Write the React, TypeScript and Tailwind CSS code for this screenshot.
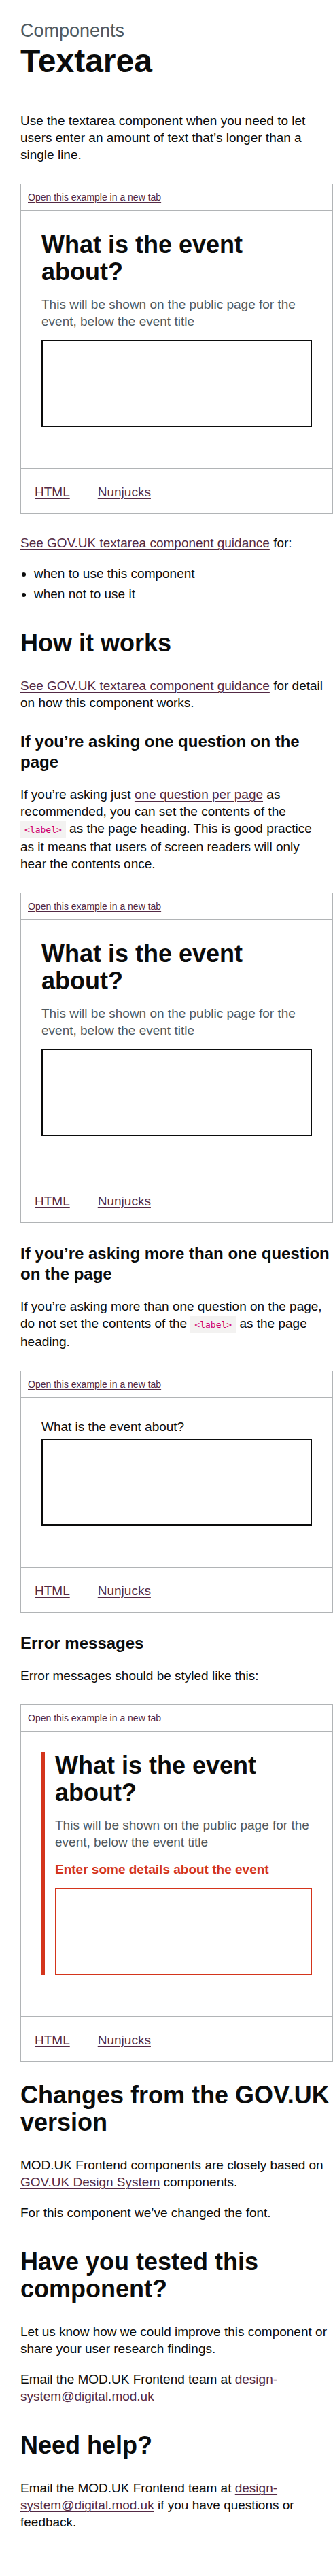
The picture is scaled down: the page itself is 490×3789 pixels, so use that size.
const link = "text-[#532a45] underline decoration-1 underline-offset-[0.1578em]";

function Code({ children }: { children: string }) {
  return (
    <code className="bg-[#f3f2f1] px-[6px] py-[5px] font-['DejaVu_Sans_Mono',monospace] text-[13px] text-[#d0006f]">
      {children}
    </code>
  );
}

// Example frame: "open in new tab" bar, the preview, then the code tabs
function Example({ children }: { children: React.ReactNode }) {
  return (
    <div className="mt-[30px] border border-[#b1b4b6]">
      <div className="border-b border-[#b1b4b6] px-[10px] py-[9px] text-[14px] leading-[20px]">
        <a href="#" className={link}>
          Open this example in a new tab
        </a>
      </div>
      <div className="px-[30px] pt-[30px] pb-[61px]">{children}</div>
      <div className="flex gap-[41px] border-t border-[#b1b4b6] pt-[21px] pb-[19px] pl-[20px] text-[19px] leading-[25px]">
        <a href="#" className={link}>
          HTML
        </a>
        <a href="#" className={link}>
          Nunjucks
        </a>
      </div>
    </div>
  );
}

function Field({ error }: { error?: boolean }) {
  return (
    <>
      <h1 className="mb-[15px] text-[36px] leading-[40px] font-bold">
        What is the event about?
      </h1>
      <div className="mb-[15px] text-[#505a5f]">
        This will be shown on the public page for the event, below the event
        title
      </div>
      {error && (
        <p className="mb-[15px] font-bold text-[#d4351c]">
          Enter some details about the event
        </p>
      )}
      <textarea
        rows={5}
        className={`block h-[128px] w-full resize-none border-2 bg-white outline-none ${
          error ? "border-[#d4351c]" : "border-[#0b0c0c]"
        }`}
      />
    </>
  );
}

export default function App() {
  return (
    <div className="min-h-[3789px] bg-white font-['Liberation_Sans',Arial,sans-serif] text-[19px] leading-[25px] text-[#0b0c0c]">
      <main className="flex w-[490px] flex-col pt-[30px] pr-0 pb-[70px] pl-[30px]">
        <span className="text-[27px] leading-[30px] text-[#505a5f]">
          Components
        </span>
        <h1 className="mt-[5px] text-[48px] leading-[50px] font-bold">
          Textarea
        </h1>

        <p className="mt-[50px]">
          Use the textarea component when you need to let users enter an amount
          of text that’s longer than a single line.
        </p>

        <Example>
          <Field />
        </Example>

        <p className="mt-[30px]">
          <a href="#" className={link}>
            See GOV.UK textarea component guidance
          </a>{" "}
          for:
        </p>
        <ul className="mt-[20px] flex list-disc flex-col gap-[5px] pl-[20px]">
          <li>when to use this component</li>
          <li>when not to use it</li>
        </ul>

        <h2 className="mt-[40px] text-[36px] leading-[40px] font-bold">
          How it works
        </h2>
        <p className="mt-[30px]">
          <a href="#" className={link}>
            See GOV.UK textarea component guidance
          </a>{" "}
          for detail on how this component works.
        </p>

        <h3 className="mt-[30px] text-[24px] leading-[30px] font-bold">
          If you’re asking one question on the page
        </h3>
        <p className="mt-[20px] pr-[8px]">
          If you’re asking just{" "}
          <a href="#" className={link}>
            one question per page
          </a>{" "}
          as recommended, you can set the contents of the <Code>{"<label>"}</Code>{" "}
          as the page heading. This is good practice as it means that users of
          screen readers will only hear the contents once.
        </p>

        <Example>
          <Field />
        </Example>

        <h3 className="mt-[30px] text-[24px] leading-[30px] font-bold">
          If you’re asking more than one question on the page
        </h3>
        <p className="mt-[20px]">
          If you’re asking more than one question on the page, do not set the
          contents of the <Code>{"<label>"}</Code> as the page heading.
        </p>

        <Example>
          <label className="mb-[5px] block">What is the event about?</label>
          <textarea
            rows={5}
            className="block h-[128px] w-full resize-none border-2 border-[#0b0c0c] bg-white outline-none"
          />
        </Example>

        <h3 className="mt-[30px] text-[24px] leading-[30px] font-bold">
          Error messages
        </h3>
        <p className="mt-[20px]">Error messages should be styled like this:</p>

        <Example>
          <div className="border-l-[5px] border-[#d4351c] pl-[15px]">
            <Field error />
          </div>
        </Example>

        <h2 className="mt-[29px] text-[36px] leading-[40px] font-bold">
          Changes from the GOV.UK version
        </h2>
        <p className="mt-[30px]">
          MOD.UK Frontend components are closely based on{" "}
          <a href="#" className={link}>
            GOV.UK Design System
          </a>{" "}
          components.
        </p>
        <p className="mt-[20px]">
          For this component we’ve changed the font.
        </p>

        <h2 className="mt-[40px] text-[36px] leading-[40px] font-bold">
          Have you tested this component?
        </h2>
        <p className="mt-[30px]">
          Let us know how we could improve this component or share your user
          research findings.
        </p>
        <p className="mt-[20px]">
          Email the MOD.UK Frontend team at{" "}
          <a href="#" className={link}>
            design-system@digital.mod.uk
          </a>
        </p>

        <h2 className="mt-[40px] text-[36px] leading-[40px] font-bold">
          Need help?
        </h2>
        <p className="mt-[30px]">
          Email the MOD.UK Frontend team at{" "}
          <a href="#" className={link}>
            design-system@digital.mod.uk
          </a>{" "}
          if you have questions or feedback.
        </p>
      </main>
    </div>
  );
}
